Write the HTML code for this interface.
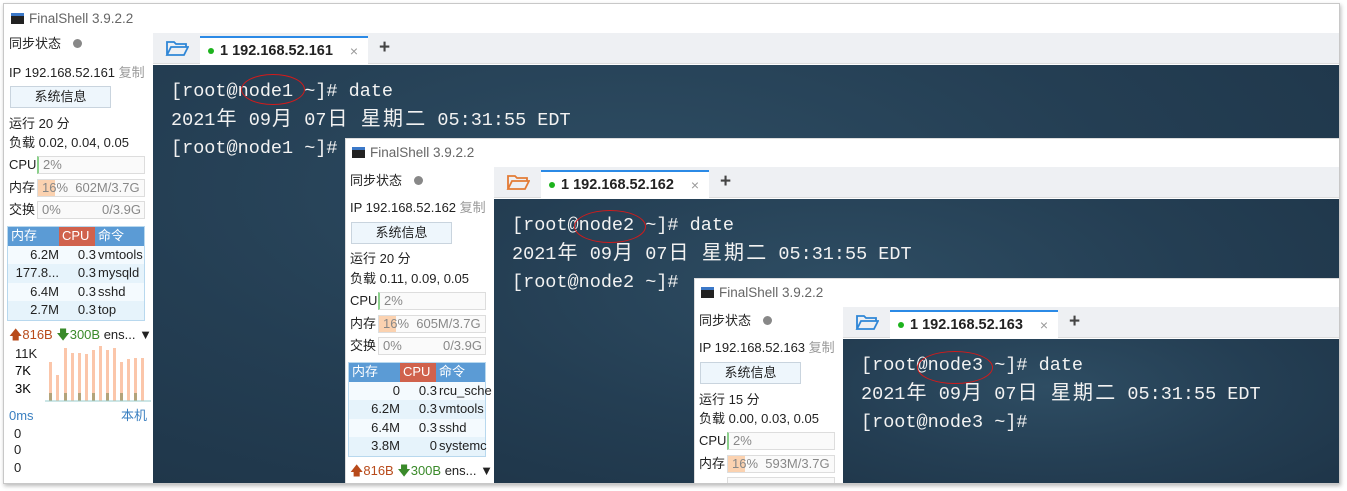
<!DOCTYPE html><html><head><meta charset="utf-8"><style>
*{margin:0;padding:0;box-sizing:border-box}
body{width:1347px;height:491px;background:#fff;position:relative;overflow:hidden;font-family:"Liberation Sans","Noto Sans CJK SC",sans-serif;color:#222}
#frame{position:absolute;left:3px;top:3px;width:1337px;height:481px;border:1px solid #c8c8c8;box-shadow:1px 2px 4px #bbb;overflow:hidden;background:#fff}
.win{position:absolute;background:#fff;border-left:1px solid #ddd;border-top:1px solid #ddd}
.title{position:absolute;left:4px;top:0;height:28px;font-size:13.5px;color:#666;line-height:28px;padding-left:20px}
.title i{position:absolute;left:2px;top:8px;width:13px;height:11px;background:#222;border-top:3px solid #3b78c8}
.side{position:absolute;left:0;top:28px;width:146px;bottom:0;font-size:13px}
.s{position:absolute;left:4px;white-space:nowrap;line-height:18px;height:18px}
.btn{position:absolute;left:5px;width:101px;height:22px;border:1px solid #c9d4de;background:#eef6fc;text-align:center;line-height:20px;font-size:13px}
.bar{position:absolute;left:32px;width:108px;height:18px;border:1px solid #ddd;background:#fafafa;font-size:13px;color:#888;line-height:16px;padding-left:4px}
.tbl{position:absolute;left:2px;width:138px;font-size:13px}
.tbl div{height:18.5px;line-height:18.5px;position:relative}
.tbl span{position:absolute}
.tabbar{position:absolute;left:148px;right:0;top:28px;height:31px;background:#eef0f3;border-bottom:1px solid #ddd}
.tab{position:absolute;left:47px;top:3px;width:168px;height:29px;background:#fff;border-top:2px solid #2b8ae6;font-weight:bold;font-size:14.5px;line-height:26px;padding-left:8px}
.tab b{display:inline-block;width:6px;height:6px;border-radius:3px;background:#1db31d;margin-right:6px;vertical-align:middle}
.tab em{position:absolute;right:10px;font-style:normal;font-weight:normal;color:#999;font-size:14px}
.plus{position:absolute;left:226px;top:4px;font-size:19px;font-weight:bold;color:#444}
.term{position:absolute;left:148px;right:0;top:60px;bottom:0;background:radial-gradient(ellipse at 40% 30%,#2e4d63 0%,#243e53 50%,#1d3346 100%);font-family:"Liberation Mono","Noto Sans CJK SC",monospace;font-size:18.5px;color:#f2f2f2;padding:13px 0 0 18px;line-height:28.5px;white-space:pre}
.term u{text-decoration:none;display:inline-block;width:22.2px;font-size:20px;text-align:center;font-family:"Noto Sans CJK SC",sans-serif;line-height:20px}
.ell{position:absolute;border:1.5px solid #d21b1b;border-radius:50%}
</style></head><body><div id="frame">

<!-- window 1 -->
<div class="win" style="left:1px;top:1px;width:1340px;height:480px;border:none">
<div class="title"><i></i>FinalShell 3.9.2.2</div>
<div class="side">
<div class="s" style="top:2px">同步状态 <span style="display:inline-block;width:9px;height:9px;border-radius:5px;background:#888;margin-left:8px"></span></div>
<div class="s" style="top:31px">IP 192.168.52.161 <span style="color:#999">复制</span></div>
<div class="btn" style="top:53px">系统信息</div>
<div class="s" style="top:82px">运行 20 分</div>
<div class="s" style="top:101px">负载 0.02, 0.04, 0.05</div>
<div class="s" style="top:123px">CPU</div><div class="bar" style="top:123px;border-left:2px solid #8bd08b">2%</div>
<div class="s" style="top:146px">内存</div><div class="bar" style="top:146px;background:linear-gradient(90deg,#fbd2b0 16%,#fafafa 16%)">16% &nbsp;602M/3.7G</div>
<div class="s" style="top:168px">交换</div><div class="bar" style="top:168px">0%<span style="position:absolute;right:3px">0/3.9G</span></div>
<div class="tbl" style="top:193px;border:1px solid #b8d8ee">
<div style="background:#5b9bd5;color:#fff"><span style="left:3px">内存</span><span style="left:51px;width:36px;background:#d0624d;padding-left:3px">CPU</span><span style="left:90px">命令</span></div>
<div style="background:#f4fafe"><span style="right:85px">6.2M</span><span style="right:48px">0.3</span><span style="left:90px">vmtools</span></div>
<div style="background:#e6f3fb"><span style="right:85px">177.8...</span><span style="right:48px">0.3</span><span style="left:90px">mysqld</span></div>
<div style="background:#f4fafe"><span style="right:85px">6.4M</span><span style="right:48px">0.3</span><span style="left:90px">sshd</span></div>
<div style="background:#e6f3fb"><span style="right:85px">2.7M</span><span style="right:48px">0.3</span><span style="left:90px">top</span></div>
</div>
<div class="s" style="top:293px"><span style="color:#b84a1a">🡅816B</span> <span style="color:#3a8a2a">🡇300B</span> ens... ▼</div>
<svg style="position:absolute;left:4px;top:312px" width="142" height="58"><text x="6" y="13" font-size="13" fill="#222">11K</text><text x="6" y="30" font-size="13">7K</text><text x="6" y="48" font-size="13">3K</text>
<g fill="#fbc6aa"><rect x="40" y="17" width="3" height="39"/><rect x="47" y="30" width="3" height="26"/><rect x="55" y="3" width="3" height="53"/><rect x="62" y="8" width="3" height="48"/><rect x="69" y="8" width="3" height="48"/><rect x="76" y="9" width="3" height="47"/><rect x="83" y="5" width="3" height="51"/><rect x="90" y="1" width="3" height="55"/><rect x="97" y="5" width="3" height="51"/><rect x="104" y="3" width="3" height="53"/><rect x="111" y="17" width="3" height="39"/><rect x="118" y="14" width="3" height="42"/><rect x="125" y="13" width="3" height="43"/><rect x="132" y="13" width="3" height="43"/></g>
<g fill="#b3a37a"><rect x="40" y="48" width="3" height="8"/><rect x="55" y="48" width="3" height="8"/><rect x="69" y="48" width="3" height="8"/><rect x="83" y="48" width="3" height="8"/><rect x="97" y="48" width="3" height="8"/><rect x="111" y="48" width="3" height="8"/><rect x="125" y="48" width="3" height="8"/></g>
<line x1="36" y1="56" x2="142" y2="56" stroke="#9cc" /></svg>
<div class="s" style="top:374px;color:#3a7fc0">0ms</div><div class="s" style="top:374px;left:116px;color:#3a7fc0">本机</div>
<div class="s" style="top:392px;left:9px">0</div><div class="s" style="top:408px;left:9px">0</div><div class="s" style="top:426px;left:9px">0</div>
</div>
<div class="tabbar"><svg style="position:absolute;left:12px;top:6px" width="24" height="18"><path d="M2 3h7l2 2h10v3H6L2 16z M2 16L6 8h17l-4 8z" fill="none" stroke="#2f86d6" stroke-width="1.8"/></svg><div class="tab"><b></b>1 192.168.52.161<em>×</em></div><div class="plus">+</div></div>
<div class="term">[root@node1 ~]# date
2021<u>年</u> 09<u>月</u> 07<u>日</u> <u>星</u><u>期</u><u>二</u> 05:31:55 EDT
[root@node1 ~]#</div>
<div class="ell" style="left:236px;top:69px;width:64px;height:31px"></div>
</div>

<!-- window 2 -->
<div class="win" style="left:341px;top:134px;width:1000px;height:350px">
<div class="title"><i></i>FinalShell 3.9.2.2</div>
<div class="side">
<div class="s" style="top:5px">同步状态 <span style="display:inline-block;width:9px;height:9px;border-radius:5px;background:#888;margin-left:8px"></span></div>
<div class="s" style="top:32px">IP 192.168.52.162 <span style="color:#999">复制</span></div>
<div class="btn" style="top:55px">系统信息</div>
<div class="s" style="top:83px">运行 20 分</div>
<div class="s" style="top:103px">负载 0.11, 0.09, 0.05</div>
<div class="s" style="top:125px">CPU</div><div class="bar" style="top:125px;border-left:2px solid #8bd08b">2%</div>
<div class="s" style="top:148px">内存</div><div class="bar" style="top:148px;background:linear-gradient(90deg,#fbd2b0 16%,#fafafa 16%)">16% &nbsp;605M/3.7G</div>
<div class="s" style="top:170px">交换</div><div class="bar" style="top:170px">0%<span style="position:absolute;right:3px">0/3.9G</span></div>
<div class="tbl" style="top:195px;border:1px solid #b8d8ee">
<div style="background:#5b9bd5;color:#fff"><span style="left:3px">内存</span><span style="left:51px;width:36px;background:#d0624d;padding-left:3px">CPU</span><span style="left:90px">命令</span></div>
<div style="background:#f4fafe"><span style="right:85px">0</span><span style="right:48px">0.3</span><span style="left:90px">rcu_sche</span></div>
<div style="background:#e6f3fb"><span style="right:85px">6.2M</span><span style="right:48px">0.3</span><span style="left:90px">vmtools</span></div>
<div style="background:#f4fafe"><span style="right:85px">6.4M</span><span style="right:48px">0.3</span><span style="left:90px">sshd</span></div>
<div style="background:#e6f3fb"><span style="right:85px">3.8M</span><span style="right:48px">0</span><span style="left:90px">systemc</span></div>
</div>
<div class="s" style="top:295px"><span style="color:#b84a1a">🡅816B</span> <span style="color:#3a8a2a">🡇300B</span> ens... ▼</div>
</div>
<div class="tabbar"><svg style="position:absolute;left:12px;top:6px" width="24" height="18"><path d="M2 3h7l2 2h10v3H6L2 16z M2 16L6 8h17l-4 8z" fill="none" stroke="#e37b35" stroke-width="1.8"/></svg><div class="tab"><b></b>1 192.168.52.162<em>×</em></div><div class="plus">+</div></div>
<div class="term">[root@node2 ~]# date
2021<u>年</u> 09<u>月</u> 07<u>日</u> <u>星</u><u>期</u><u>二</u> 05:31:55 EDT
[root@node2 ~]#</div>
<div class="ell" style="left:228px;top:71px;width:72px;height:33px"></div>
</div>

<!-- window 3 -->
<div class="win" style="left:690px;top:274px;width:660px;height:220px">
<div class="title"><i></i>FinalShell 3.9.2.2</div>
<div class="side">
<div class="s" style="top:5px">同步状态 <span style="display:inline-block;width:9px;height:9px;border-radius:5px;background:#888;margin-left:8px"></span></div>
<div class="s" style="top:32px">IP 192.168.52.163 <span style="color:#999">复制</span></div>
<div class="btn" style="top:55px">系统信息</div>
<div class="s" style="top:84px">运行 15 分</div>
<div class="s" style="top:103px">负载 0.00, 0.03, 0.05</div>
<div class="s" style="top:125px">CPU</div><div class="bar" style="top:125px;border-left:2px solid #8bd08b">2%</div>
<div class="s" style="top:148px">内存</div><div class="bar" style="top:148px;background:linear-gradient(90deg,#fbd2b0 16%,#fafafa 16%)">16% &nbsp;593M/3.7G</div>
<div class="bar" style="top:170px"></div>
</div>
<div class="tabbar"><svg style="position:absolute;left:12px;top:6px" width="24" height="18"><path d="M2 3h7l2 2h10v3H6L2 16z M2 16L6 8h17l-4 8z" fill="none" stroke="#2f86d6" stroke-width="1.8"/></svg><div class="tab"><b></b>1 192.168.52.163<em>×</em></div><div class="plus">+</div></div>
<div class="term">[root@node3 ~]# date
2021<u>年</u> 09<u>月</u> 07<u>日</u> <u>星</u><u>期</u><u>二</u> 05:31:55 EDT
[root@node3 ~]#</div>
<div class="ell" style="left:222px;top:72px;width:76px;height:33px"></div>
</div>

</div></body></html>
